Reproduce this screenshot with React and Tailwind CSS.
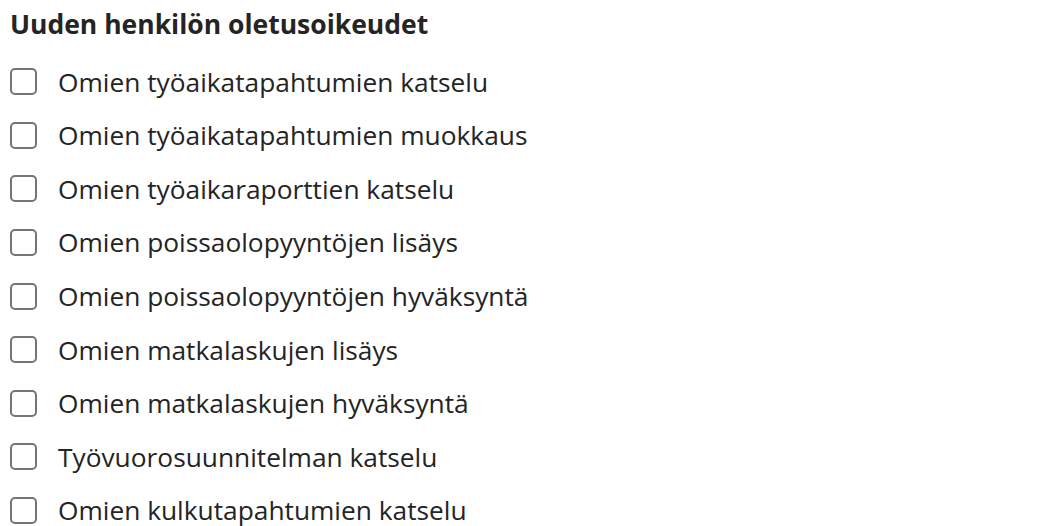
const items = [
  "Omien työaikatapahtumien katselu",
  "Omien työaikatapahtumien muokkaus",
  "Omien työaikaraporttien katselu",
  "Omien poissaolopyyntöjen lisäys",
  "Omien poissaolopyyntöjen hyväksyntä",
  "Omien matkalaskujen lisäys",
  "Omien matkalaskujen hyväksyntä",
  "Työvuorosuunnitelman katselu",
  "Omien kulkutapahtumien katselu",
];

export default function App() {
  return (
    <div
      className="w-[1040px] h-[526px] overflow-hidden bg-white text-[#242424] px-[10px]"
      style={{ fontFamily: '"Open Sans", "Noto Sans", sans-serif' }}
    >
      <h2 className="h-[52px] pb-[2px] flex items-center text-[26.5px] font-bold text-[#242424]">
        Uuden henkilön oletusoikeudet
      </h2>
      <div className="flex flex-col pt-[3px]">
        {items.map((label) => (
          <label key={label} className="h-[53.6px] flex items-center gap-[21px]">
            <span className="w-[27px] h-[27px] shrink-0 rounded-[5px] border-2 border-[#757575] bg-white" />
            <span className="text-[26.3px] leading-[1.3] text-[#242424]">{label}</span>
          </label>
        ))}
      </div>
    </div>
  );
}
